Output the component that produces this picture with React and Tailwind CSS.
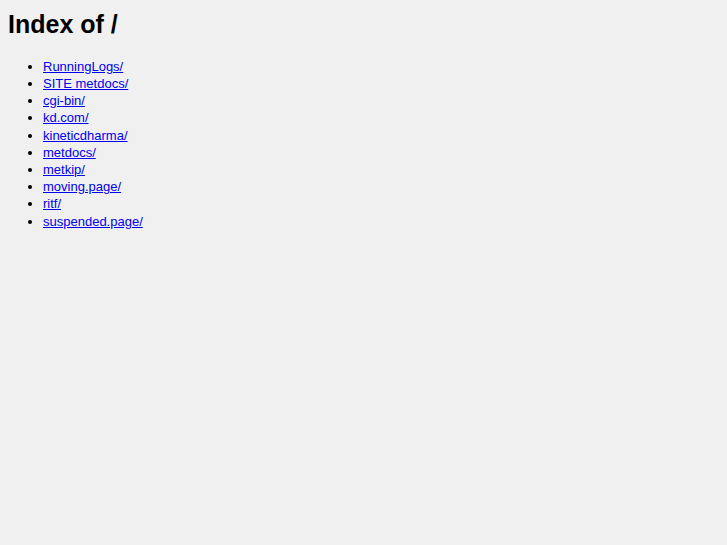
export default function App() {
  const dirs = [
    "RunningLogs/",
    "SITE metdocs/",
    "cgi-bin/",
    "kd.com/",
    "kineticdharma/",
    "metdocs/",
    "metkip/",
    "moving.page/",
    "ritf/",
    "suspended.page/",
  ];

  return (
    <div className="min-h-[545px] bg-[#f0f0f0] px-2 pt-[10px] text-black font-['Liberation_Sans',Arial,sans-serif]">
      <h1 className="text-[25px] font-bold leading-[28.7px]">Index of /</h1>
      <ul className="mt-[19px] list-disc pl-[35px] text-[13px] leading-[17.22px]">
        {dirs.map((d) => (
          <li key={d}>
            <a href="#" className="text-[#0000ee] underline">
              {d}
            </a>
          </li>
        ))}
      </ul>
    </div>
  );
}
